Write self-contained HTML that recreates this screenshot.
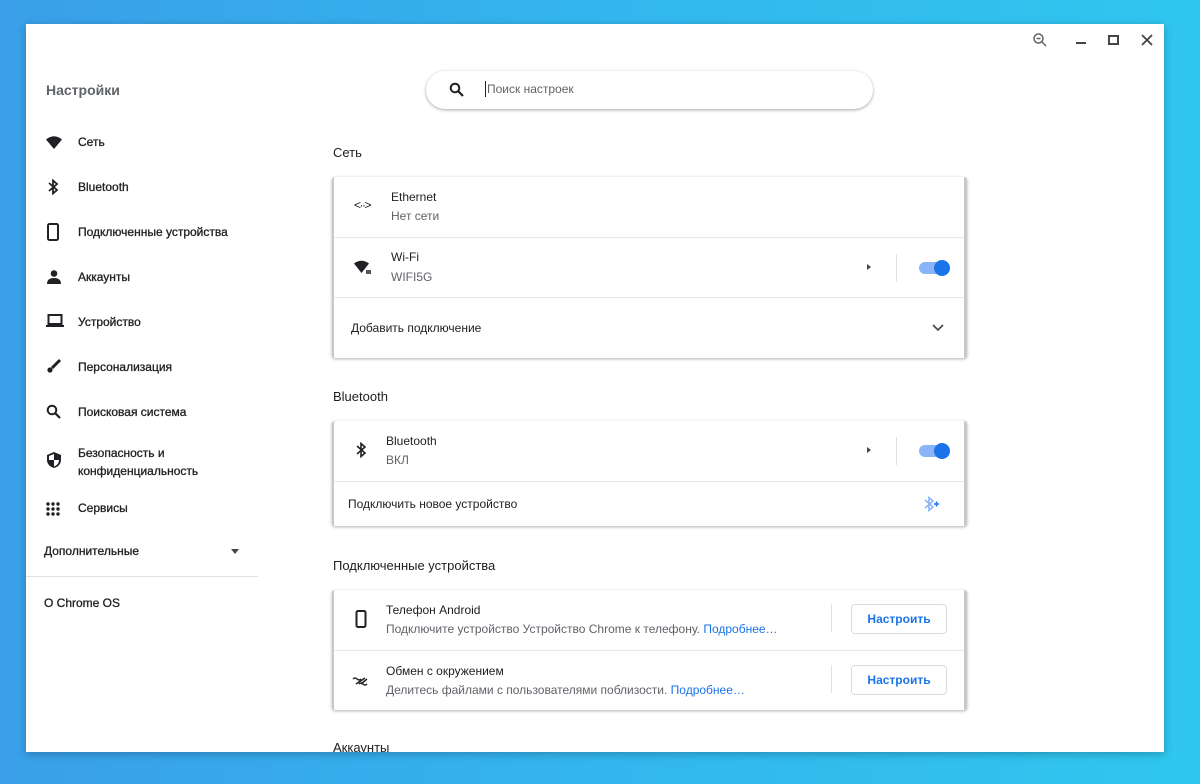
<!DOCTYPE html>
<html><head><meta charset="utf-8"><style>
*{margin:0;padding:0;box-sizing:border-box}
body{width:1200px;height:784px;overflow:hidden;background:linear-gradient(90deg,#3a9fe8,#33b6ee 50%,#30c6ee);font-family:"Liberation Sans",sans-serif;color:#202124;position:relative}
.win{position:absolute;left:26px;top:24px;width:1138px;height:728px;background:#fff;overflow:hidden;box-shadow:0 2px 8px rgba(0,0,0,.25)}
.a{position:absolute}
.side{font-size:12px;color:#202124}
.side .it{position:absolute;left:52px;-webkit-text-stroke:0.3px #202124}
.side svg{position:absolute;left:20px}
.card{position:absolute;left:306px;width:635px;background:#fff;border-left:2px solid #c8c8c8;border-right:3px solid #c8c8c8;border-radius:3px;box-shadow:0 1px 3px rgba(0,0,0,.3)}
.row{position:relative;border-top:1px solid #e8e8e8}
.row:first-child{border-top:none}
.t{font-size:12px;color:#202124;position:absolute}
.s{font-size:12px;color:#5f6368;position:absolute}
.h{position:absolute;left:307px;font-size:13px;color:#202124}
.tog{position:absolute;width:28px;height:12px;border-radius:6px;background:#8ab4f8}
.tog:after{content:"";position:absolute;right:-3px;top:-2px;width:16px;height:16px;border-radius:50%;background:#1a73e8}
.sep{position:absolute;width:1px;height:28px;background:#e0e0e0}
.btn{position:absolute;width:96px;height:30px;border:1px solid #dadce0;border-radius:4px;color:#1a73e8;font-size:12px;font-weight:bold;text-align:center;line-height:28px}
a{color:#1a73e8;text-decoration:none}
</style></head><body>
<div class="win">
<svg class="a" style="left:1006px;top:8px" width="16" height="16" viewBox="0 0 16 16"><circle cx="6.5" cy="6.5" r="4.5" fill="none" stroke="#5f6368" stroke-width="1.5"/><path d="M4.5 6.5h4M10 10l4 4" stroke="#5f6368" stroke-width="1.5"/></svg>
<div class="a" style="left:1050px;top:18px;width:10px;height:2px;background:#444"></div>
<div class="a" style="left:1082px;top:11px;width:11px;height:10px;border:2px solid #444"></div>
<svg class="a" style="left:1115px;top:10px" width="12" height="12" viewBox="0 0 12 12"><path d="M1 1l10 10M11 1L1 11" stroke="#444" stroke-width="1.8"/></svg>

<div class="side">
<div class="a" style="left:20px;top:58px;font-size:14px;color:#5f6368;font-weight:bold">Настройки</div>
<svg style="top:112px" width="16" height="14" viewBox="0 0 16 14"><path d="M0 3.5Q8-3 16 3.5L8 13Z" fill="#202124"/></svg><div class="it" style="top:111px">Сеть</div>
<svg style="top:155px" width="14" height="16" viewBox="0 0 14 16"><path d="M3 4l8 7-4 3.5V1.5L11 5 3 12" fill="none" stroke="#202124" stroke-width="1.8"/></svg><div class="it" style="top:156px">Bluetooth</div>
<svg style="top:199px" width="14" height="18" viewBox="0 0 14 18"><rect x="2" y="1" width="10" height="16" rx="1.5" fill="none" stroke="#202124" stroke-width="2"/></svg><div class="it" style="top:201px">Подключенные устройства</div>
<svg style="top:245px" width="16" height="16" viewBox="0 0 16 16"><circle cx="8" cy="4.5" r="3.3" fill="#202124"/><path d="M1 15q0-6 7-6t7 6z" fill="#202124"/></svg><div class="it" style="top:246px">Аккаунты</div>
<svg style="top:290px" width="18" height="14" viewBox="0 0 18 14"><rect x="2.5" y="1" width="13" height="9" fill="none" stroke="#202124" stroke-width="2"/><rect x="0" y="11" width="18" height="2" fill="#202124"/></svg><div class="it" style="top:291px">Устройство</div>
<svg style="top:334px" width="16" height="16" viewBox="0 0 16 16"><path d="M14 2L6 10" stroke="#202124" stroke-width="3"/><circle cx="4" cy="12" r="2.6" fill="#202124"/></svg><div class="it" style="top:336px">Персонализация</div>
<svg style="top:380px" width="16" height="16" viewBox="0 0 16 16"><circle cx="6" cy="6" r="4.3" fill="none" stroke="#202124" stroke-width="2"/><path d="M9 9l5 5" stroke="#202124" stroke-width="2.2"/></svg><div class="it" style="top:381px">Поисковая система</div>
<svg style="top:427px" width="16" height="18" viewBox="0 0 16 18"><path d="M8 1L1 4v5c0 4 3 7 7 8 4-1 7-4 7-8V4z" fill="#202124"/><path d="M8 3v6H3V5zM8 9h5c0 3-2 5.5-5 6.5z" fill="#fff"/></svg><div class="it" style="top:420px;line-height:18px">Безопасность и<br>конфиденциальность</div>
<svg style="top:478px" width="14" height="14" viewBox="0 0 14 14" fill="#202124"><circle cx="2" cy="2" r="1.7"/><circle cx="7" cy="2" r="1.7"/><circle cx="12" cy="2" r="1.7"/><circle cx="2" cy="7" r="1.7"/><circle cx="7" cy="7" r="1.7"/><circle cx="12" cy="7" r="1.7"/><circle cx="2" cy="12" r="1.7"/><circle cx="7" cy="12" r="1.7"/><circle cx="12" cy="12" r="1.7"/></svg><div class="it" style="top:477px">Сервисы</div>
<div class="a" style="left:18px;top:520px;-webkit-text-stroke:0.3px #202124">Дополнительные</div>
<div class="a" style="left:205px;top:525px;border:4px solid transparent;border-top:5px solid #444;border-bottom:0"></div>
<div class="a" style="left:0;top:552px;width:232px;height:1px;background:#e0e0e0"></div>
<div class="a" style="left:18px;top:572px;-webkit-text-stroke:0.3px #202124">О Chrome OS</div>
</div>

<div class="a" style="left:400px;top:47px;width:447px;height:38px;border-radius:19px;background:#fff;box-shadow:0 1px 3px rgba(0,0,0,.35)"></div>
<svg class="a" style="left:423px;top:58px" width="16" height="16" viewBox="0 0 16 16"><circle cx="6" cy="6" r="4.3" fill="none" stroke="#202124" stroke-width="2"/><path d="M9 9l5 5" stroke="#202124" stroke-width="2.2"/></svg>
<div class="a" style="left:459px;top:57px;width:1px;height:16px;background:#202124"></div>
<div class="a" style="left:461px;top:58px;font-size:12px;color:#5f6368">Поиск настроек</div>

<div class="h" style="top:121px">Сеть</div>
<div class="card" style="top:153px;height:181px">
 <div class="row" style="height:60px">
  <div class="a" style="left:20px;top:21px;font-size:12px;color:#202124;letter-spacing:-1.5px">&lt;··&gt;</div>
  <div class="t" style="left:57px;top:13px">Ethernet</div><div class="s" style="left:57px;top:32px">Нет сети</div>
 </div>
 <div class="row" style="height:60px">
  <svg class="a" style="left:20px;top:22px" width="18" height="16" viewBox="0 0 18 16"><path d="M0 3.5Q7.5-2 15 3.5L7.5 13Z" fill="#202124"/><rect x="12" y="10" width="5" height="4" fill="#555"/></svg>
  <div class="t" style="left:57px;top:12px">Wi-Fi</div><div class="s" style="left:57px;top:32px">WIFI5G</div>
  <div class="a" style="left:533px;top:26px;border:3px solid transparent;border-left:4px solid #444;border-right:0;height:0"></div>
  <div class="sep" style="left:562px;top:16px"></div>
  <div class="tog" style="left:585px;top:24px"></div>
 </div>
 <div class="row" style="height:60px">
  <div class="t" style="left:17px;top:23px">Добавить подключение</div>
  <svg class="a" style="left:598px;top:26px" width="12" height="8" viewBox="0 0 12 8"><path d="M1 1l5 5 5-5" fill="none" stroke="#444" stroke-width="1.6"/></svg>
 </div>
</div>

<div class="h" style="top:365px">Bluetooth</div>
<div class="card" style="top:397px;height:105px">
 <div class="row" style="height:60px">
  <svg class="a" style="left:20px;top:21px" width="14" height="16" viewBox="0 0 14 16"><path d="M3 4l8 7-4 3.5V1.5L11 5 3 12" fill="none" stroke="#202124" stroke-width="1.6"/></svg>
  <div class="t" style="left:52px;top:13px">Bluetooth</div><div class="s" style="left:52px;top:32px">ВКЛ</div>
  <div class="a" style="left:533px;top:26px;border:3px solid transparent;border-left:4px solid #444;border-right:0;height:0"></div>
  <div class="sep" style="left:562px;top:16px"></div>
  <div class="tog" style="left:585px;top:24px"></div>
 </div>
 <div class="row" style="height:45px">
  <div class="t" style="left:14px;top:15px">Подключить новое устройство</div>
  <svg class="a" style="left:588px;top:14px" width="18" height="16" viewBox="0 0 18 16"><path d="M3 4l8 7-4 3.5V1.5L11 5 3 12" fill="none" stroke="#8ab4f8" stroke-width="1.6"/><path d="M12 8h5M14.5 5.5v5" stroke="#1a73e8" stroke-width="1.5"/></svg>
 </div>
</div>

<div class="h" style="top:534px">Подключенные устройства</div>
<div class="card" style="top:566px;height:120px">
 <div class="row" style="height:60px">
  <svg class="a" style="left:21px;top:20px" width="12" height="18" viewBox="0 0 12 18"><rect x="1.5" y="1" width="9" height="16" rx="1.5" fill="none" stroke="#202124" stroke-width="2"/></svg>
  <div class="t" style="left:52px;top:13px">Телефон Android</div>
  <div class="s" style="left:52px;top:32px">Подключите устройство Устройство Chrome к телефону. <a>Подробнее…</a></div>
  <div class="sep" style="left:497px;top:14px"></div>
  <div class="btn" style="left:517px;top:14px">Настроить</div>
 </div>
 <div class="row" style="height:60px">
  <svg class="a" style="left:18px;top:25px" width="18" height="10" viewBox="0 0 18 10"><path d="M1 3q2-2 4 0t4 0M7 8q2-2 4 0t4 0M4 8L13 2M9 8l6-5" fill="none" stroke="#202124" stroke-width="1.5"/></svg>
  <div class="t" style="left:52px;top:13px">Обмен с окружением</div>
  <div class="s" style="left:52px;top:32px">Делитесь файлами с пользователями поблизости. <a>Подробнее…</a></div>
  <div class="sep" style="left:497px;top:14px"></div>
  <div class="btn" style="left:517px;top:14px">Настроить</div>
 </div>
</div>
<div class="h" style="top:716px">Аккаунты</div>
</div>
</body></html>
